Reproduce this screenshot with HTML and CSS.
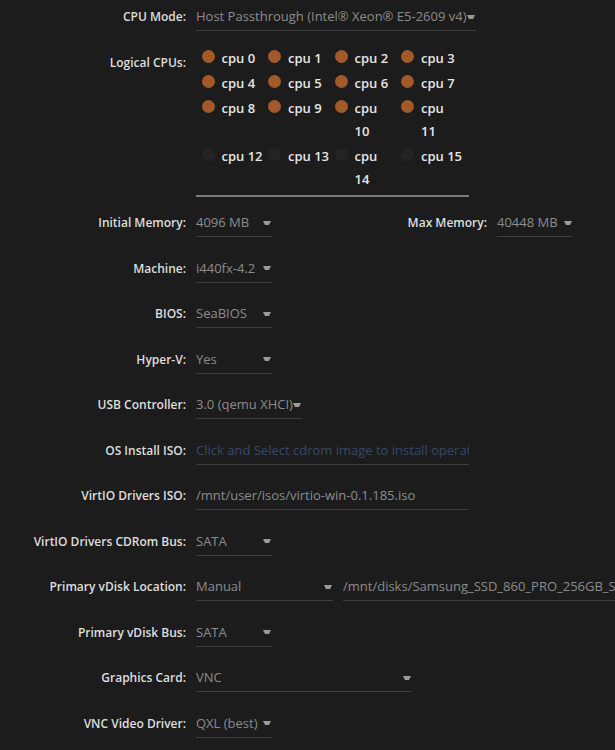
FILE: index.html
```html
<!DOCTYPE html>
<html lang="en">
<head>
    <meta charset="UTF-8">
    <meta name="viewport" content="width=device-width, initial-scale=1.0">
    <title>VM Settings</title>
    <link rel="stylesheet" href="styles.css">
</head>
<body>

<div class="form">
    <!-- CPU -->
    <div class="row">
        <span class="label">CPU Mode:</span>
        <span class="select">Host Passthrough (Intel® Xeon® E5-2609 v4)<i class="caret"></i></span>
    </div>

    <div class="row row-cpus">
        <span class="label">Logical CPUs:</span>
        <div class="cpus">
            <label class="cpu on"><i></i>cpu 0</label>
            <label class="cpu on"><i></i>cpu 1</label>
            <label class="cpu on"><i></i>cpu 2</label>
            <label class="cpu on"><i></i>cpu 3</label>
            <label class="cpu on"><i></i>cpu 4</label>
            <label class="cpu on"><i></i>cpu 5</label>
            <label class="cpu on"><i></i>cpu 6</label>
            <label class="cpu on"><i></i>cpu 7</label>
            <label class="cpu on"><i></i>cpu 8</label>
            <label class="cpu on"><i></i>cpu 9</label>
            <label class="cpu on"><i></i><span class="narrow">cpu 10</span></label>
            <label class="cpu on"><i></i><span class="narrow">cpu 11</span></label>
            <label class="cpu"><i></i>cpu 12</label>
            <label class="cpu"><i></i>cpu 13</label>
            <label class="cpu"><i></i><span class="narrow">cpu 14</span></label>
            <label class="cpu"><i></i>cpu 15</label>
        </div>
    </div>

    <!-- Memory -->
    <div class="row">
        <span class="label">Initial Memory:</span>
        <span class="select">4096 MB<i class="caret"></i></span>
        <span class="label label-side">Max Memory:</span>
        <span class="select">40448 MB<i class="caret"></i></span>
    </div>

    <div class="row">
        <span class="label">Machine:</span>
        <span class="select">i440fx-4.2<i class="caret"></i></span>
    </div>

    <div class="row">
        <span class="label">BIOS:</span>
        <span class="select">SeaBIOS<i class="caret"></i></span>
    </div>

    <div class="row">
        <span class="label">Hyper-V:</span>
        <span class="select">Yes<i class="caret"></i></span>
    </div>

    <div class="row">
        <span class="label">USB Controller:</span>
        <span class="select">3.0 (qemu XHCI)<i class="caret"></i></span>
    </div>

    <!-- Install media -->
    <div class="row">
        <span class="label">OS Install ISO:</span>
        <span class="input placeholder">Click and Select cdrom image to install operating system</span>
    </div>

    <div class="row">
        <span class="label">VirtIO Drivers ISO:</span>
        <span class="input">/mnt/user/isos/virtio-win-0.1.185.iso</span>
    </div>

    <div class="row">
        <span class="label">VirtIO Drivers CDRom Bus:</span>
        <span class="select">SATA<i class="caret"></i></span>
    </div>

    <!-- Disk -->
    <div class="row">
        <span class="label">Primary vDisk Location:</span>
        <span class="select select-disk">Manual<i class="caret"></i></span>
        <span class="input input-path">/mnt/disks/Samsung_SSD_860_PRO_256GB_S3YKNX0K123456B/vdisk1.img</span>
    </div>

    <div class="row">
        <span class="label">Primary vDisk Bus:</span>
        <span class="select">SATA<i class="caret"></i></span>
    </div>

    <!-- Graphics -->
    <div class="row">
        <span class="label">Graphics Card:</span>
        <span class="select select-gpu">VNC<i class="caret"></i></span>
    </div>

    <div class="row">
        <span class="label">VNC Video Driver:</span>
        <span class="select">QXL (best)<i class="caret"></i></span>
    </div>
</div>

</body>
</html>
```

FILE: styles.css
```css
body {
    margin: 0;
    padding: 3px 0 0;
    background: #1c1c1c;
    font-family: "Open Sans", "Noto Sans", sans-serif;
    font-size: 13px;
    color: #8c8c8c;
    overflow: hidden;
}
.form {
    display: flex;
    flex-direction: column;
}
.row {
    display: flex;
    align-items: flex-start;
    min-height: 28px;
    margin-bottom: 17.5px;
    white-space: nowrap;
}
.row-cpus {
    margin-bottom: 12.5px;
}
.label {
    flex: none;
    box-sizing: border-box;
    width: 196px;
    padding-right: 10px;
    text-align: right;
    line-height: 28px;
    font-size: 12px;
    font-weight: 600;
    color: #dedede;
}
.label-side {
    width: 225px;
}
.select, .input {
    flex: none;
    box-sizing: border-box;
    height: 28px;
    line-height: 27px;
    border-bottom: 1px solid #3d3d3d;
    overflow: hidden;
}
.select {
    display: flex;
    align-items: center;
    min-width: 76px;
    padding-right: 1px;
}
.caret {
    flex: none;
    margin-left: auto;
    padding-left: 4px;
    width: 0;
    height: 0;
    border-left: 2.5px solid transparent;
    border-right: 2.5px solid transparent;
    border-top: 4px solid #9a9a9a;
    background-clip: content-box;
}
.select-disk {
    width: 137px;
}
.select-gpu {
    width: 216px;
}
.input {
    width: 273px;
}
.input-path {
    width: 290px;
    margin-left: 10px;
}
.placeholder {
    color: #394869;
}

/* logical cpu pick list */
.cpus {
    display: grid;
    grid-template-columns: repeat(4, 66.5px);
    row-gap: 2px;
    width: 273px;
    box-sizing: border-box;
    margin-top: -2px;
    padding: 0 0 4px 5.5px;
    border-bottom: 2px solid #7a7a7a;
}
.cpu {
    display: flex;
    align-items: flex-start;
    line-height: 23px;
    font-weight: 600;
    color: #e6e6e6;
    white-space: normal;
}
.cpu i {
    flex: none;
    width: 13px;
    height: 13px;
    margin: 3px 7px 0 0;
    border-radius: 50%;
    background: #232323;
}
.cpu.on i {
    background: #a35a28;
}
.narrow {
    width: 30px;
}
```
